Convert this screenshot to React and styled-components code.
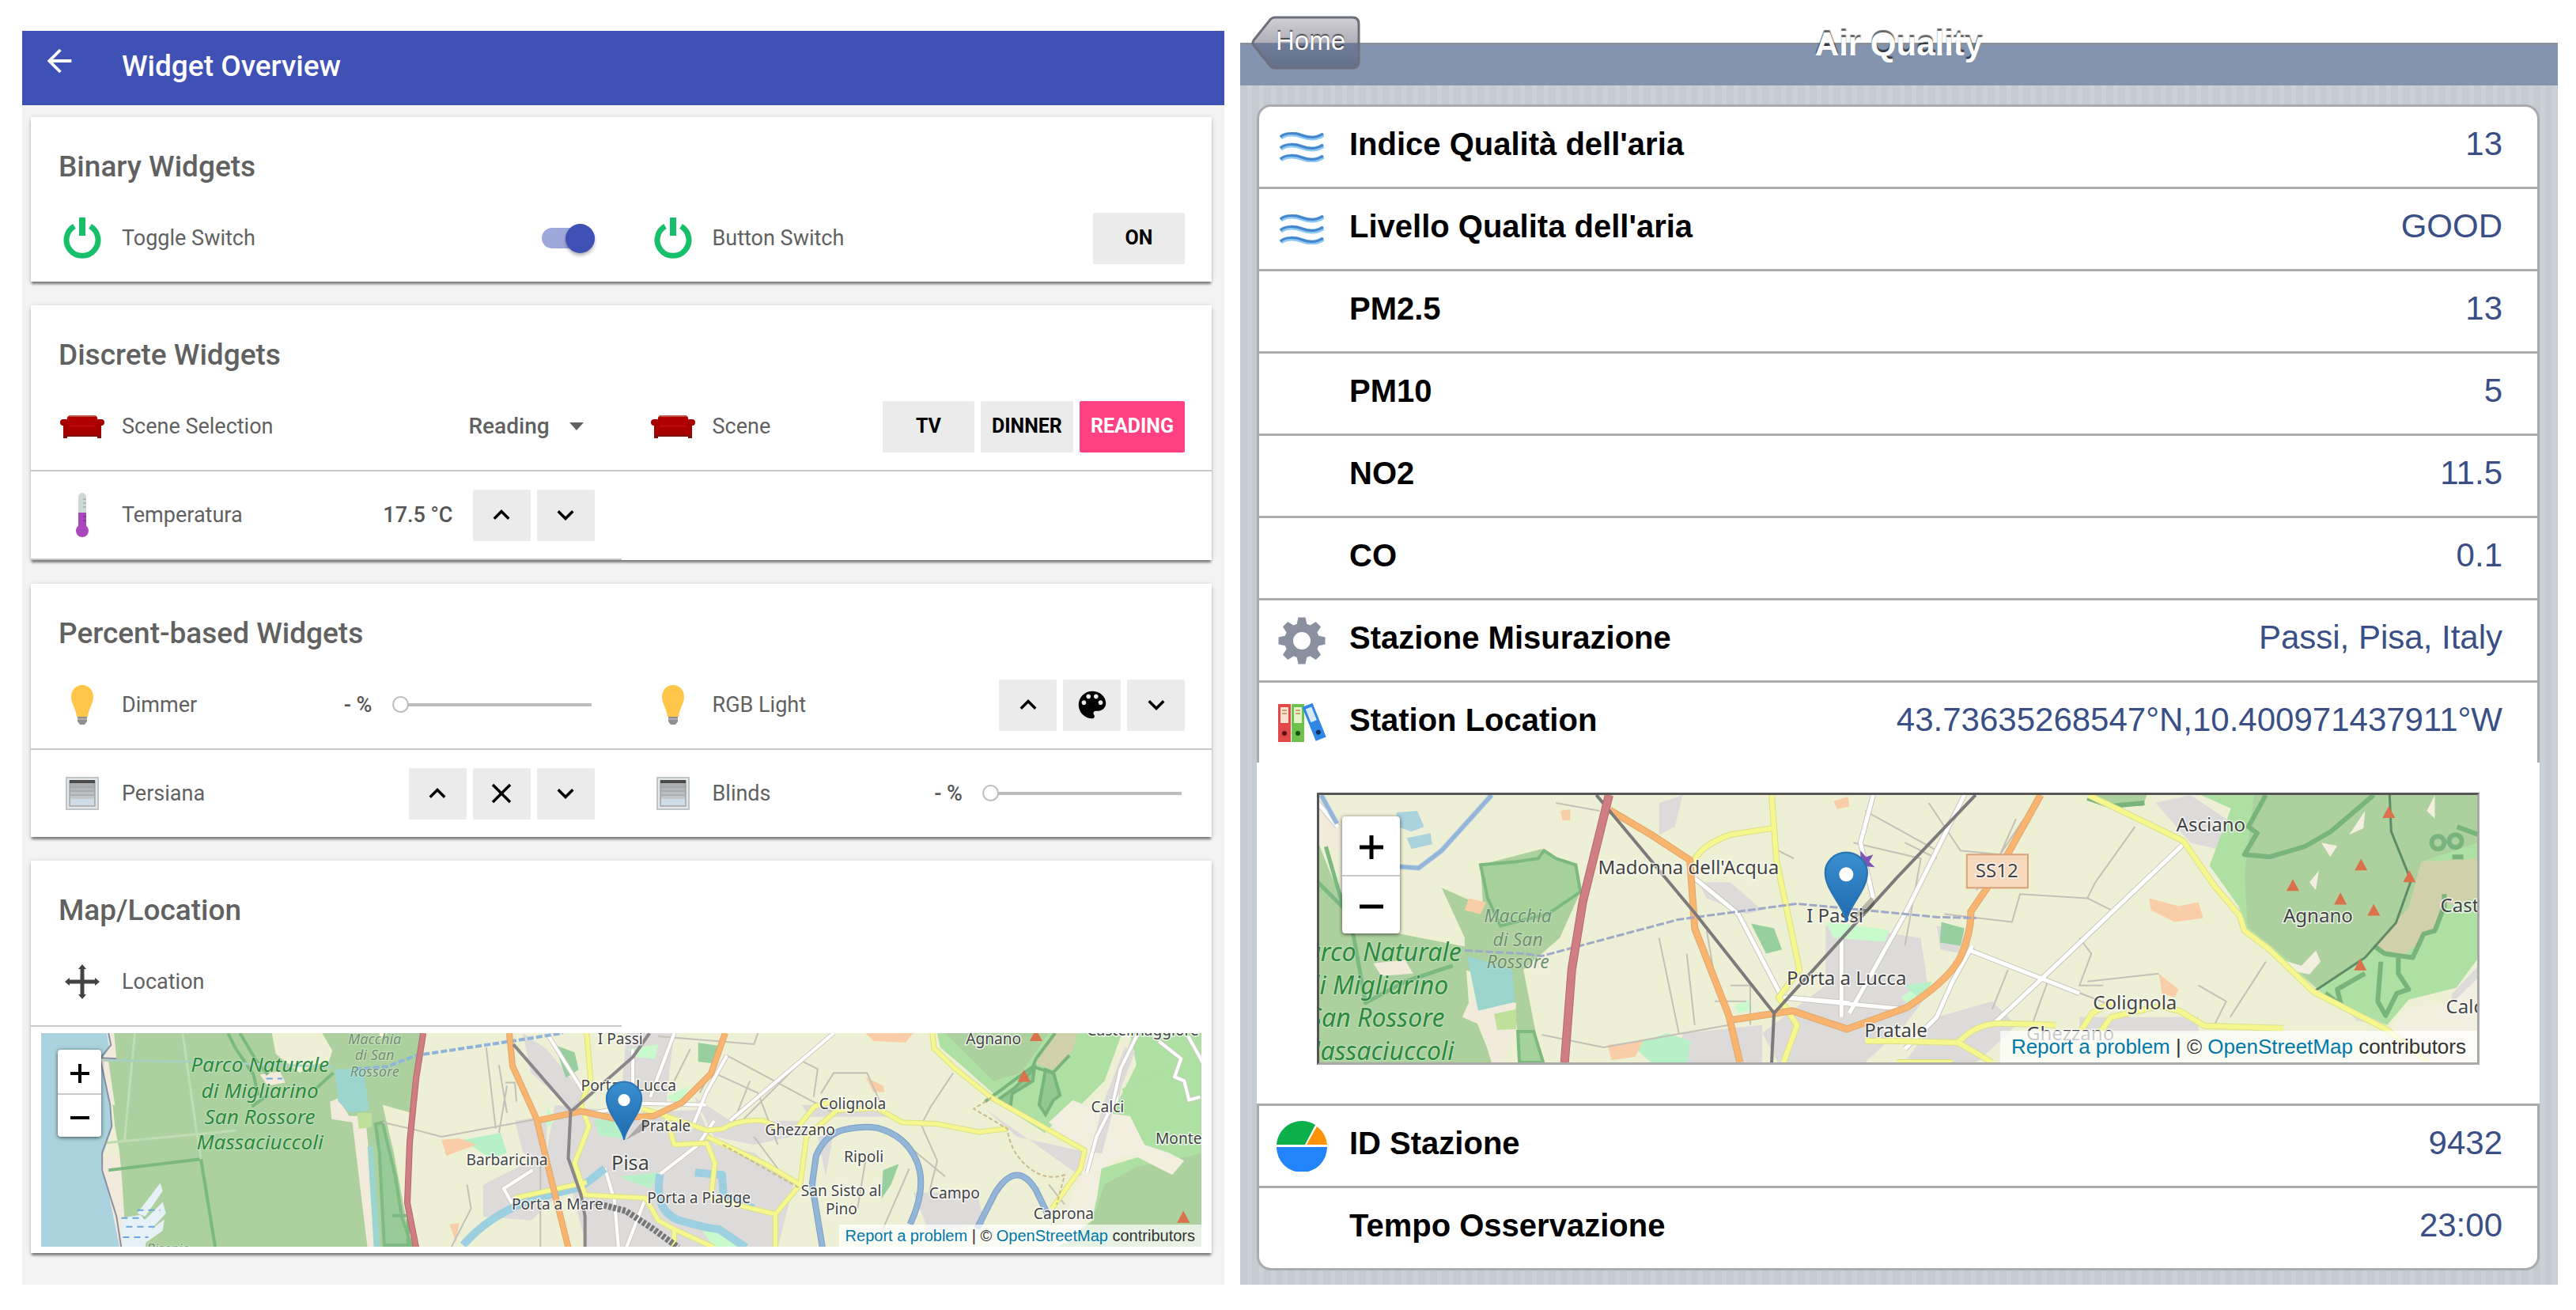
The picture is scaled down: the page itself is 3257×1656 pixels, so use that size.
import React from "react";
import styled, { createGlobalStyle, css } from "styled-components";

const sans = `"Liberation Sans", Arial, sans-serif`;
const roboto = `Roboto, "Liberation Sans", sans-serif`;

const GlobalStyle = createGlobalStyle`
  *, *::before, *::after { box-sizing: border-box; }
  body { margin: 0; background: #fff; font-family: ${roboto}; }
  h1, h2, ul, p { margin: 0; padding: 0; }
  button, select, input { font: inherit; margin: 0; }
`;

/* ---------- page ---------- */

const Page = styled.main`
  display: grid;
  grid-template-columns: 1520fr 1666fr;
  gap: 20px;
  min-height: 100vh;
  padding: 0 23px 32px 28px;
`;

/* ---------- widget overview panel ---------- */

const WidgetPanel = styled.section`
  margin-top: 39px;
  background: #f3f3f3;
`;

const AppBar = styled.header`
  display: flex;
  gap: 56px;
  height: 94px;
  padding: 15px 24px;
  background: #3f51b5;
  color: #fff;
`;

const BackButton = styled.button`
  display: flex;
  align-items: center;
  width: 46px;
  height: 46px;
  padding: 0;
  border: 0;
  background: none;
  color: inherit;
`;

const AppTitle = styled.h1`
  font: 500 37px/60px ${roboto};
`;

const Cards = styled.div`
  display: flex;
  flex-direction: column;
  gap: 30px;
  padding: 15px 16px 40px 11px;
`;

const Card = styled.section`
  background: #fff;
  box-shadow: 0 4px 3px -1px rgba(0, 0, 0, 0.45), 0 1px 6px rgba(0, 0, 0, 0.16);
`;

const CardTitle = styled.h2`
  padding: 36px 35px 8px;
  color: #616161;
  font: 500 37px/54px ${roboto};
`;

const Row = styled.div`
  display: grid;
  grid-template-columns: 1fr 1fr;
`;

const Cell = styled.div`
  display: flex;
  align-items: center;
  gap: 21px;
  height: ${(p) => (p.$line ? 112 : 110)}px;
  padding: 0 34px 0 36px;
  border-bottom: ${(p) => (p.$line ? "2px solid #c8c8c8" : "0")};
`;

const IconBox = styled.span`
  display: flex;
  justify-content: center;
  width: 58px;
`;

const Label = styled.label`
  flex: 1;
  color: #616161;
  font: 400 27px/36px ${roboto};
`;

const Reading = styled.output`
  padding-right: 4px;
  color: #555;
  font: 500 27px/36px ${roboto};
`;

const Buttons = styled.div`
  display: flex;
  gap: 8px;
`;

const flat = css`
  height: 65px;
  border: 0;
  border-radius: 2px;
  background: ${(p) => (p.$active ? "#ff4081" : "#ebebeb")};
  color: ${(p) => (p.$active ? "#fff" : "#000")};
`;

const TextButton = styled.button`
  ${flat}
  min-width: 116px;
  padding: 0 14px;
  font: 700 25px/36px ${roboto};
`;

const IconButton = styled.button`
  ${flat}
  display: flex;
  align-items: center;
  justify-content: center;
  width: 73px;
  padding: 0;
`;

const Toggle = styled.input`
  appearance: none;
  display: flex;
  align-items: center;
  justify-content: flex-end;
  width: 67px;
  height: 26px;
  border-radius: 13px;
  background: #9fa8da;

  &::before {
    content: "";
    width: 37px;
    height: 37px;
    border-radius: 50%;
    background: #3f51b5;
    box-shadow: 0 3px 4px rgba(0, 0, 0, 0.3);
  }
`;

const Slider = styled.input`
  appearance: none;
  width: 256px;
  height: 24px;
  padding-right: 4px;
  background: none;

  &::-webkit-slider-runnable-track {
    height: 4px;
    background: linear-gradient(90deg, transparent 20px, #bdbdbd 20px);
  }

  &::-webkit-slider-thumb {
    appearance: none;
    width: 21px;
    height: 21px;
    margin-top: -9px;
    border: 2px solid #bdbdbd;
    border-radius: 50%;
    background: #fff;
  }
`;

const SelectWrap = styled.span`
  display: flex;
  align-items: center;
  gap: 24px;
  padding-right: 14px;
`;

const Select = styled.select`
  appearance: none;
  padding: 0;
  border: 0;
  background: none;
  color: #616161;
  font: 500 28px/36px ${roboto};
`;

/* ---------- maps ---------- */

const MapInset = styled.div`
  padding: 8px 13px;
`;

const MapBox = styled.div`
  position: relative;
  height: ${(p) => p.$height}px;
  overflow: hidden;
  background: #eef0d5;
  ${(p) =>
    p.$framed &&
    css`
      border: 3px solid #a9a9a9;
      border-top-color: #555;
      border-left-color: #555;
    `}
`;

const MapSvg = styled.svg`
  display: block;
  width: 100%;
  height: 100%;
`;

const ZoomControl = styled.div`
  position: absolute;
  top: ${(p) => (p.$large ? 27 : 21)}px;
  left: ${(p) => (p.$large ? 29 : 21)}px;
  display: flex;
  flex-direction: column;
  width: ${(p) => (p.$large ? 73 : 55)}px;
  border-radius: 4px;
  background: #fff;
  box-shadow: 0 1px 5px rgba(0, 0, 0, 0.65);
`;

const ZoomButton = styled.button`
  display: flex;
  align-items: center;
  justify-content: center;
  height: ${(p) => (p.$large ? 74 : 55)}px;
  padding: 4px 0 0;
  border: 0;
  background: none;
  color: #000;

  & + & {
    border-top: 2px solid #c8c8c8;
  }
`;

const Attribution = styled.p`
  position: absolute;
  right: 0;
  bottom: 0;
  padding: ${(p) => (p.$large ? "0 14px" : "0 8px")};
  background: rgba(255, 255, 255, 0.72);
  color: #333;
  font: 400 ${(p) => (p.$large ? "26px/40px" : "20px/28px")} ${sans};
  white-space: nowrap;
`;

const MapLink = styled.a`
  color: #0078a8;
  text-decoration: none;
`;

const Place = styled.text`
  fill: #444;
  stroke: rgba(255, 255, 255, 0.75);
  stroke-width: 3px;
  paint-order: stroke;
  font: 400 ${(p) => p.$size || 20}px "Noto Sans", sans-serif;
`;

const Nature = styled.text`
  fill: ${(p) => (p.$muted ? "#6f9073" : "#2c8a3f")};
  stroke: rgba(255, 255, 255, 0.35);
  stroke-width: 2px;
  paint-order: stroke;
  text-anchor: middle;
  font: italic 400 ${(p) => p.$size}px "Noto Sans", sans-serif;
`;

/* ---------- air quality panel ---------- */

const AirPanel = styled.section`
  display: flex;
  flex-direction: column;
`;

const TitleBar = styled.header`
  display: grid;
  grid-template-columns: 1fr auto 1fr;
  align-items: center;
  height: 108px;
  padding: 0 14px;
  background: linear-gradient(#fff 54px, #8a8f9c 54px, #8a8f9c 57px, #8394af 57px);
`;

const HomeButton = styled.button`
  position: relative;
  justify-self: start;
  width: 138px;
  height: 68px;
  padding: 0 0 4px 12px;
  border: 0;
  background: none;
  color: #fff;
  font: 400 33px/60px ${sans};
  text-shadow: 0 -2px 1px rgba(0, 0, 0, 0.6);
`;

const HomeShape = styled.svg`
  position: absolute;
  inset: 0;
`;

const HomeText = styled.span`
  position: relative;
`;

const AirTitle = styled.h1`
  padding-top: 4px;
  color: #fff;
  font: 700 42px/60px ${sans};
  text-shadow: 0 -3px 1px rgba(0, 0, 0, 0.6);
`;

const Striped = styled.div`
  flex: 1;
  display: flex;
  padding: 24px 23px 18px 21px;
  background: repeating-linear-gradient(90deg, #c5cbd1 0 9px, #c9d2d9 9px 15px);
`;

const List = styled.ul`
  flex: 1;
  display: flex;
  flex-direction: column;
  border: 3px solid #a9abae;
  border-radius: 18px;
  background: #fff;
  list-style: none;
`;

const Item = styled.li`
  flex: 1;
  display: flex;
  align-items: center;
  gap: 28px;
  padding: 0 44px 0 22px;
  border-bottom: ${(p) => (p.$open ? "0" : "3px solid #a9abae")};
`;

const ItemIcon = styled.span`
  display: flex;
  justify-content: center;
  width: 64px;
`;

const ItemName = styled.span`
  flex: 1;
  padding-bottom: 8px;
  color: #000;
  font: 700 40px/48px ${sans};
`;

const ItemValue = styled.span`
  padding-bottom: 8px;
  color: #3a4f85;
  font: 400 42px/48px ${sans};
`;

const MapItem = styled.li`
  height: 434px;
  margin: 0 -3px;
  padding: 38px 76px 0;
  border-bottom: 3px solid #a9abae;
  background: #fff;
`;

/* ---------- icons ---------- */

const Glyph = ({ d, size = 42 }) => (
  <svg width={size} height={size} viewBox="0 0 24 24" fill="currentColor" aria-hidden="true">
    <path d={d} />
  </svg>
);

const BACK = "M20 11H7.83l5.59-5.59L12 4l-8 8 8 8 1.41-1.41L7.83 13H20v-2z";
const UP = "M7.41 15.41L12 10.83l4.59 4.58L18 14l-6-6-6 6z";
const DOWN = "M7.41 8.59L12 13.17l4.59-4.58L18 10l-6 6-6-6z";
const CLOSE =
  "M19 6.41L17.59 5 12 10.59 6.41 5 5 6.41 10.59 12 5 17.59 6.41 19 12 13.41 17.59 19 19 17.59 13.41 12z";
const PALETTE =
  "M12 3c-4.97 0-9 4.03-9 9s4.03 9 9 9c.83 0 1.5-.67 1.5-1.5 0-.39-.15-.74-.39-1.01-.23-.26-.38-.61-.38-.99 0-.83.67-1.5 1.5-1.5H16c2.76 0 5-2.24 5-5 0-4.42-4.03-8-9-8zm-5.5 9c-.83 0-1.5-.67-1.5-1.5S5.67 9 6.5 9 8 9.67 8 10.5 7.33 12 6.5 12zm3-4C8.67 8 8 7.33 8 6.5S8.67 5 9.5 5s1.5.67 1.5 1.5S10.33 8 9.5 8zm5 0c-.83 0-1.5-.67-1.5-1.5S13.67 5 14.5 5s1.5.67 1.5 1.5S15.33 8 14.5 8zm3 4c-.83 0-1.5-.67-1.5-1.5S16.67 9 17.5 9s1.5.67 1.5 1.5-.67 1.5-1.5 1.5z";

const PowerIcon = () => (
  <svg width="48" height="54" viewBox="0 0 48 54" fill="none" stroke="#17bf6b" strokeWidth="7">
    <path d="M14 12A20 20 0 1 0 34 12" />
    <path d="M24 1V24" strokeWidth="8" />
  </svg>
);

const SofaIcon = () => (
  <svg width="58" height="30" viewBox="0 0 58 30">
    <path d="M10 4Q11 1 14 1H44Q47 1 48 4L49 14H9Z" fill="#b00000" />
    <path d="M11 3Q12 1 14 1H44Q46 1 47 3Z" fill="#c0564a" />
    <path d="M1 10Q1 6 5 6H9Q11 6 12 9L13 13H45L46 9Q47 6 49 6H53Q57 6 57 10Q57 14 53 14V28H5V14Q1 14 1 10Z" fill="#a60000" />
    <path d="M12 13H46V16H12Z" fill="#b90808" />
    <path d="M5 26H53V30H48V28H10V30H5Z" fill="#7c1212" />
  </svg>
);

const ThermometerIcon = () => (
  <svg width="18" height="58" viewBox="0 0 18 58">
    <rect x="4" y="1" width="10" height="46" rx="5" fill="#cfd8d6" />
    <path d="M4 26H14V44H4Z" fill="#ab47bc" />
    <circle cx="9" cy="49" r="8" fill="#ab47bc" />
    <path d="M10 9h4M10 14h4M10 19h4" stroke="#9fb0ae" strokeWidth="1.5" />
    <path d="M10 31h4M10 36h4" stroke="#7c3a8a" strokeWidth="1.5" />
  </svg>
);

const BulbIcon = () => (
  <svg width="32" height="52" viewBox="0 0 32 52">
    <path d="M16 1C7 1 2 8 2 16C2 25 8 30 9 41H23C24 30 30 25 30 16C30 8 25 1 16 1Z" fill="#ffc64a" />
    <path d="M10 41H22V47L19 51H13L10 47Z" fill="#8f8f92" />
    <path d="M10 44H22" stroke="#b9b9bb" strokeWidth="1.5" />
  </svg>
);

const BlindsIcon = () => (
  <svg width="42" height="42" viewBox="0 0 42 42">
    <defs>
      <linearGradient id="slat" x2="0" y2="1">
        <stop offset="0" stopColor="#a8a8a8" />
        <stop offset="1" stopColor="#d2d6d8" />
      </linearGradient>
    </defs>
    <rect x="1" y="1" width="40" height="40" fill="#e3e7ea" stroke="#bfc4c7" strokeWidth="2" />
    <rect x="5" y="5" width="32" height="32" fill="url(#slat)" stroke="#8a8d90" />
    <rect x="5" y="4" width="32" height="4" fill="#4a4a4a" />
    <path d="M6 13H36M6 18H36M6 23H36" stroke="#9a9da0" />
    <rect x="6" y="28" width="30" height="8" fill="#cfdde8" />
  </svg>
);

const MoveIcon = () => (
  <svg width="44" height="44" viewBox="0 0 44 44" stroke="#424242" fill="#424242">
    <path d="M22 3V41M3 22H41" strokeWidth="5" />
    <path d="M22 0l5 6H17zM22 44l5-6H17zM0 22l6-5v10zM44 22l-6-5v10z" stroke="none" />
  </svg>
);

const WavesIcon = () => (
  <svg width="56" height="38" viewBox="0 0 56 38" fill="none">
    {[5, 19, 33].map((y) => (
      <React.Fragment key={y}>
        <path d={`M1 ${y + 2}C8 ${y - 4} 20 ${y - 3} 28 ${y}S46 ${y + 4} 55 ${y - 2}`} stroke="#8cc8f5" strokeWidth="6" />
        <path d={`M1 ${y + 1}C8 ${y - 5} 20 ${y - 4} 28 ${y - 1}S46 ${y + 3} 55 ${y - 3}`} stroke="#4585cc" strokeWidth="3" />
      </React.Fragment>
    ))}
  </svg>
);

const GearIcon = () => (
  <svg width="60" height="60" viewBox="-30 -30 60 60">
    {[0, 45, 90, 135, 180, 225, 270, 315].map((a) => (
      <path key={a} d="M-7 -18L-4.500 -29.500H4.500L7 -18Z" fill="#8a90a0" transform={`rotate(${a})`} />
    ))}
    <circle r="16.500" fill="none" stroke="#8a90a0" strokeWidth="11" />
  </svg>
);

const BindersIcon = () => (
  <svg width="62" height="50" viewBox="0 0 62 50">
    <rect x="1" y="1" width="16" height="48" fill="#e0484a" />
    <rect x="18" y="1" width="16" height="48" fill="#6cc24a" />
    <g transform="rotate(-22 46 25)">
      <rect x="40" y="1" width="14" height="46" fill="#2f86e6" />
      <rect x="43" y="5" width="8" height="18" fill="#d7e8f7" />
      <circle cx="47" cy="38" r="3" fill="#10305c" />
    </g>
    <rect x="4" y="5" width="10" height="20" fill="#fbe0d0" />
    <rect x="21" y="5" width="10" height="20" fill="#e4f3c9" />
    <path d="M6 9h6M6 13h6M23 9h6M23 13h6" stroke="#c08a4a" strokeWidth="1.500" />
    <circle cx="9" cy="38" r="3" fill="#5c0f0f" />
    <circle cx="26" cy="38" r="3" fill="#14501a" />
  </svg>
);

const PieIcon = () => (
  <svg width="64" height="64" viewBox="-32 -32 64 64">
    <path d="M-32 1A32 32 0 0 0 32 1Z" fill="#2184fb" />
    <path d="M-32 -2A32 32 0 0 1 17 -27L4 -2Z" fill="#0bb04b" />
    <path d="M19 -25A32 32 0 0 1 32 -2H6Z" fill="#ff9408" />
  </svg>
);

/* ---------- map drawing ---------- */

const Lines = ({ paths, color, width, casing, dash }) => (
  <g fill="none" strokeLinejoin="round" strokeLinecap="butt">
    {casing && paths.map((d) => <path key={"c" + d} d={d} stroke={casing} strokeWidth={width + 2} />)}
    {paths.map((d) => (
      <path key={d} d={d} stroke={color} strokeWidth={width} strokeDasharray={dash} />
    ))}
  </g>
);

const Areas = ({ paths, color, stroke }) => (
  <g fill={color} stroke={stroke || "none"} strokeWidth="4">
    {paths.map((d) => (
      <path key={d} d={d} />
    ))}
  </g>
);

const Peaks = ({ at }) => (
  <g fill="#d9724a">
    {at.map(([x, y]) => (
      <path key={x} d={`M${x} ${y - 8}l8 15h-16z`} />
    ))}
  </g>
);

const Marker = ({ x, y, scale }) => (
  <g transform={`translate(${x} ${y}) scale(${scale})`}>
    <defs>
      <linearGradient id={`pin${x}`} x2="0" y2="1">
        <stop offset="0" stopColor="#3a8fcf" />
        <stop offset="1" stopColor="#1f69b0" />
      </linearGradient>
    </defs>
    <path d="M2 0L26 -26Q34 -20 24 -12Z" fill="rgba(0,0,0,.22)" />
    <path
      d="M0 0C-2 -17 -22 -33 -22 -52A22 21 0 0 1 22 -52C22 -33 2 -17 0 0Z"
      fill={`url(#pin${x})`}
      stroke="#2a74b4"
      strokeWidth="2"
    />
    <circle cy="-50" r="7.500" fill="#fff" />
  </g>
);

const Labels = ({ items, size }) =>
  items.map(([x, y, text, own]) => (
    <Place key={text} x={x} y={y} $size={own || size}>
      {text}
    </Place>
  ));

const PisaMap = () => (
  <MapSvg viewBox="0 0 1467 268" preserveAspectRatio="xMidYMid slice" role="img" aria-label="Pisa">
    <rect width="1467" height="268" fill="#eef0d5" />
    <Areas color="#aad3df" paths={["M0 0H88L91 15L86 30L80 34L91 90L94 120L82 155L81 172L88 190L101 230L104 269H0Z"]} />
    <Areas color="#add19e" paths={["M96 0H485L476 57L468 137L465 213L476 269H110L96 190L104 150L98 117L92 60L88 34L98 30Z"]} />
    <Areas color="#f2ebdc" paths={["M88 0H97L100 32L80 34L91 20ZM80 36L90 36L98 90L92 90ZM84 155L104 152L106 172L108 200L112 269H104L88 190L81 168Z"]} />
    <Areas color="#eef0d5" paths={["M295 0H358L371 22L365 40L350 38L330 50L300 26Z", "M430 0L440 0L430 8Z", "M434 90L470 100L465 213L476 269H470L448 150Z"]} />
    <Areas color="#98cb95" stroke="#7fbb82" paths={["M425 114L434 112L450 180L458 230L470 266H436L430 150Z"]} />
    <Areas color="#f2ebdc" paths={["M368 86L378 82L392 104H412L430 269H415L396 112L370 108Z", "M280 52L305 48L312 62L290 66Z"]} />
    <Areas color="#9bd5cd" paths={["M374 45H410L417 97L392 100L378 85Z", "M415 142H422L431 269H423Z"]} />
    <Areas color="#bfe09b" paths={["M402 100H420V118L404 120Z"]} />
    <Lines
      color="#7cb981"
      width={4}
      paths={[
        "M90 172L206 158L224 269",
        "M240 0L250 20L272 52L278 78M270 92L290 78",
        "M255 0L275 34L290 52M350 70L372 50",
        "M446 229H466V269",
      ]}
    />
    <Lines color="#bfdcb4" width={3} paths={["M123 0L110 135M84 138L250 122", "M183 0L200 120L206 158"]} />
    <Lines color="#a9cfc0" width={3} paths={["M84 34L200 36L300 40L372 42"]} />
    <Areas color="#e6f1f7" paths={["M155 188L158 198L136 230L126 226ZM158 212L162 226L140 250L126 244ZM160 234L158 248L138 262L130 256ZM106 232L130 228L142 240L136 268H108Z"]} />
    <Lines color="#6aa7e0" width={2} dash="8 6" paths={["M106 232H135M112 243H150M108 256H140M126 222H155M288 57H308"]} />
    <g fill="#dddbd9">
      <path d="M650 90L700 95L760 100L830 96L850 140L900 150L950 190L930 269H690L672 200L640 150Z" />
      <path d="M740 0H800L795 40L790 90L750 90L735 60ZM610 0L640 20L690 80L672 96L620 50Z" />
      <path d="M560 190L620 160L660 150L670 190L620 235L560 230ZM600 110L640 104L640 170L610 150Z" />
      <path d="M825 80L870 110L960 110L970 125L900 140L850 130ZM1100 200H1180L1190 240L1120 250Z" />
      <path d="M1190 95L1230 130L1320 150L1340 170L1310 180L1240 130ZM960 90H1060L1070 105H970ZM980 130L1000 125L990 180Z" />
    </g>
    <Areas color="#b7f0c6" paths={["M535 134L582 125L590 150L570 158Z", "M700 108L740 112L735 132L705 128Z", "M730 180L780 175L770 195Z"]} />
    <Areas color="#f9cda8" paths={["M508 134L530 132L552 140L530 148L514 154ZM1040 0L1100 0L1090 12L1050 10ZM1040 55L1062 66L1064 74L1050 74ZM518 240L530 238L526 262Z"]} />
    <Areas color="#c8facc" paths={["M640 90L650 110L640 120ZM742 20L780 14L776 32L750 30ZM790 80L820 66L806 90ZM830 240L870 256L890 269H850Z"]} />
    <Areas color="#98cfa0" paths={["M650 15L675 24L680 46L664 56ZM830 12L855 16L850 38L830 36ZM1062 172L1082 164L1072 190L1060 208Z"]} />
    <Lines
      color="#c4c0b8"
      width={2}
      paths={[
        "M564 18L576 120M580 40L590 100M588 62H600L602 86M590 66L580 125M434 112L470 120L508 130L627 108",
        "M866 28L1000 100M1000 0L960 35L880 115M960 35L980 45L975 80M984 76L1000 50H1042L1060 90M1150 50L1122 92L1110 115",
        "M850 50L905 75L930 140M895 60L875 110M900 130L930 170M1110 115L1130 160L1120 200M1080 130L1140 180M1040 160L1030 220M1095 170L1060 250",
        "M1270 190L1290 215M1250 90L1310 120L1320 170M1330 100L1390 130M520 269L545 220L540 190",
        "M905 0L900 14L780 4M820 20L800 60M840 60L832 75M632 160V269",
      ]}
    />
    <Lines
      color="#ffffff"
      width={4}
      casing="#cfcac2"
      paths={[
        "M640 0L690 80L675 94M748 20V110M800 0L770 80M1000 0L870 110",
        "M600 220L586 195L622 172M713 170L725 210L730 269M764 207L740 269M782 177L830 140L850 110",
        "M866 28L840 75L822 120M700 100L760 88L840 90",
        "M1380 0L1360 50L1355 85L1330 120L1320 180",
      ]}
    />
    <Lines color="#8fb4dc" width={4} paths={["M400 45L440 42L476 28L596 10L660 0"]} dash="8 3" />
    <Areas color="#aedfa3" paths={["M1130 0L1134 18L1160 40L1205 80L1225 100L1265 125L1290 100L1310 90L1340 60L1362 0H1467V269H1345L1325 235L1336 170L1400 150L1370 120L1350 100L1380 40L1372 0Z"]} />
    <Areas color="#aedfa3" paths={["M1362 70L1467 20V150L1400 130L1375 105Z"]} />
    <Areas color="#add19e" paths={["M1340 190L1380 168L1467 150V269H1280L1325 235ZM1140 0H1270L1235 50L1200 60Z"]} />
    <Areas color="#f2efe0" paths={["M1270 112L1300 84L1340 100L1372 104L1390 140L1420 150L1440 160L1425 178L1370 150L1336 170L1330 210L1300 260L1275 269L1310 180L1318 150Z"]} />
    <Areas color="#d0d0ab" paths={["M1278 0H1306L1300 22L1280 48L1254 38Z"]} />
    <Areas color="#93c991" stroke="#79b47d" paths={["M1252 44L1228 68L1206 84L1222 92L1224 76L1250 60ZM1266 46L1258 90L1266 102L1276 84L1284 78L1276 50Z"]} />
    <Lines color="#79b47d" width={4} paths={["M1278 0L1254 32L1250 42L1275 50L1296 28M1250 42L1190 86"]} />
    <Lines color="#dddbd9" width={14} paths={["M1372 20L1345 90L1330 150"]} />
    <Lines color="#fff" width={4} casing="#cfcac2" paths={["M1382 0L1360 45L1350 90L1330 130L1318 175", "M1408 10L1436 32L1428 55L1440 60L1446 84L1460 80M1445 4L1465 40"]} />
    <Lines color="#92b5d8" width={6} casing="#7aa1c9" paths={["M986 269L973 190L978 154Q990 126 1014 121T1055 119Q1090 128 1104 160T1096 240", "M1180 245L1203 200Q1230 158 1254 197L1270 230"]} />
    <Lines color="#9ccfe0" width={10} paths={["M535 266Q570 226 627 207L683 193L713 170", "M782 177Q774 226 810 236T856 246L890 269", "M826 175L860 178L862 205L900 220"]} />
    <Lines
      color="#f6f78f"
      width={5}
      casing="#dcdf88"
      paths={[
        "M690 0L695 57L683 90L693 117L675 163L688 203L764 207L780 235L800 246V269",
        "M760 95L790 104L841 122L861 120Q880 108 912 110L930 118",
        "M790 104L800 140L841 138L851 163L846 207",
        "M841 130L912 163L958 190L927 227V269",
        "M846 207L897 220L927 227",
        "M958 190L966 130L1004 97L1055 94L1086 112L1131 114L1182 124L1218 120",
        "M955 118L976 92L1000 86",
        "M1124 0L1126 19L1152 44L1198 81L1244 107L1315 147L1310 170L1274 220",
        "M600 207L690 187M800 246L850 269",
      ]}
    />
    <Lines color="#c9b98c" width={2} dash="5 3" paths={["M1198 81L1176 95L1218 120Q1222 150 1244 168T1290 178L1280 215M861 140L958 195"]} />
    <Lines color="#f9b46f" width={6} casing="#dfa76c" paths={["M593 0L597 41L627 107L644 177L667 269", "M627 110L683 98L724 107L774 104L810 87L846 51L864 0"]} />
    <Lines color="#8a8689" width={4} paths={["M598 14L670 97L667 157L683 203L688 230V269", "M769 0L748 30L672 97"]} />
    <Lines color="#77777a" width={8} dash="4 2" paths={["M700 213L739 223L774 246L805 269"]} />
    <Lines color="#cf7f82" width={6} casing="#b5686d" paths={["M485 0L476 57L468 137L465 213L476 269"]} />
    <Lines color="#8a8fa5" width={2} paths={["M90 0L93 15L80 31L100 32M80 34L92 90L94 117L82 150L82 172L100 230L106 269"]} />
    <Peaks at={[[1254, 3], [1239, 54], [1439, 231]]} />
    <Nature x="280" y="49" $size={26}>Parco Naturale</Nature>
    <Nature x="280" y="81" $size={26}>di Migliarino</Nature>
    <Nature x="280" y="114" $size={26}>San Rossore</Nature>
    <Nature x="280" y="146" $size={26}>Massaciuccoli</Nature>
    <Nature x="424" y="14" $size={18} $muted>Macchia</Nature>
    <Nature x="424" y="34" $size={18} $muted>di San</Nature>
    <Nature x="424" y="55" $size={18} $muted>Rossore</Nature>
    <Nature x="165" y="276" $size={17} $muted>Bisenio</Nature>
    <Labels
      size={19}
      items={[
        [704, 14, "I Passi"],
        [683, 72, "Porta a Lucca"],
        [758, 123, "Pratale"],
        [721, 172, "Pisa", 25],
        [539, 166, "Barbaricina"],
        [596, 221, "Porta a Mare"],
        [766, 213, "Porta a Piagge"],
        [914, 128, "Ghezzano"],
        [982, 95, "Colignola"],
        [1013, 162, "Ripoli"],
        [959, 204, "San Sisto al"],
        [990, 227, "Pino"],
        [1120, 207, "Campo"],
        [1251, 233, "Caprona"],
        [1323, 99, "Calci"],
        [1404, 139, "Monter"],
        [1166, 14, "Agnano"],
        [1318, 3, "Castelmaggiore"],
      ]}
    />
    <Marker x={737} y={134} scale={1} />
  </MapSvg>
);

const StationMap = () => (
  <MapSvg viewBox="0 0 1463 337" preserveAspectRatio="xMidYMid slice" role="img" aria-label="Passi, Pisa">
    <rect width="1463" height="337" fill="#eef0d5" />
    <Areas color="#add19e" paths={["M0 59L30 134L99 174L185 191L190 261L213 318L219 337H0Z", "M156 117L208 140L205 88L282 68L325 99L331 122L305 180L259 220L282 337H254L251 295L245 240L185 220L185 180Z"]} />
    <Areas color="#a5d19b" stroke="#7cb981" paths={["M205 88L250 84L278 80L285 70L300 80L325 88L331 122L290 150L230 165L214 130Z", "M252 298L272 298L284 337H254Z"]} />
    <Areas color="#aad3df" paths={["M99 22L125 20L134 40L118 46L100 40ZM112 54L142 48L144 62L118 68Z"]} />
    <Areas color="#f2ebdc" paths={["M190 262L250 262L248 290L232 337H219L205 290L182 280ZM70 212L110 208L120 225L80 228ZM0 20L30 40V70L0 60Z"]} />
    <Areas color="#f9cda8" paths={["M190 130L212 135L205 150L185 145Z"]} />
    <Areas color="#9bd5cd" paths={["M188 203L245 220L248 261L202 272Z"]} />
    <Areas color="#bfe09b" paths={["M222 276L250 270V295L226 296Z"]} />
    <Lines color="#7cb981" width={5} paths={["M0 110L40 150L60 262L110 235L170 215M10 65L30 134L50 160"]} />
    <g fill="#dddbd9">
      <path d="M430 10L460 0L450 40L430 50ZM480 110L520 110L560 145L540 150L490 130ZM640 165L690 170L760 180L770 250L740 290L690 337H580L560 300L600 270L640 240Z" />
      <path d="M780 280L850 260L880 290L860 310L830 337H740ZM1056 10L1100 0L1160 40L1140 70L1100 60ZM1160 140H1180V165H1165ZM780 165L815 170L812 200L785 195Z" />
      <path d="M1290 262L1330 255L1350 290L1310 285ZM1430 250L1463 215V300L1420 300ZM460 300L560 290V337H450ZM960 280H1110V300H960Z" />
    </g>
    <Areas color="#c8facc" paths={["M525 265L545 258L548 270L530 275ZM640 160L720 170L715 185L650 180ZM735 255L765 235L750 270Z"]} />
    <Areas color="#b7f0c6" paths={["M395 315L440 300L470 310L466 337H420ZM740 240L775 235L760 258Z"]} />
    <Areas color="#98cfa0" paths={["M546 162L575 168L585 195L565 200ZM786 160L815 168L810 190L784 186Z"]} />
    <Areas color="#f9cda8" paths={["M365 315L410 310L400 330L370 334ZM1048 130L1085 140L1110 135L1116 155L1080 160L1050 145ZM306 20L318 18V32L308 32ZM1060 225L1085 245L1080 255L1064 250ZM650 8L668 2L670 14L655 18Z"]} />
    <Lines
      color="#c4c0b8"
      width={2}
      paths={[
        "M430 180L455 300M465 200L475 290M490 170L500 230M282 302L360 318L518 290M500 260H540M300 10L355 20",
        "M1030 40L980 110L970 130L1000 145M970 130L885 125L875 160L790 150M770 10L810 70L860 75L880 30M830 120L890 30",
        "M1195 210L1150 280M970 235L1060 225M960 180L975 200L960 240L990 240M820 195L1000 265M870 220L850 270M920 235L900 290M1110 240L1145 260L1130 290",
        "M740 60L780 80M520 240H545V290M600 80L580 70M675 60L760 80L740 190M690 20L780 70",
      ]}
    />
    <Lines
      color="#ffffff"
      width={5}
      casing="#c8c4bd"
      paths={[
        "M700 0L684 60L700 130M1091 62L930 215L850 290M820 195L960 250M475 105L530 150L585 255L740 270",
        "M815 0L740 150L670 275M825 190L800 235L780 280L740 320M660 180V280M590 255L670 262M0 10L25 40",
      ]}
    />
    <Lines color="#92b5d8" width={5} casing="#c5d5e5" paths={["M4 0L24 36M219 0L156 70L127 92L99 90"]} />
    <Areas color="#aedfa3" paths={["M1113 0L1151 17L1124 89L1162 142L1168 166L1211 205L1277 258L1348 290L1375 258L1435 243L1463 205V0Z"]} />
    <Areas color="#add19e" paths={["M970 0H1045L1040 14L1000 12ZM1180 0H1463V60L1391 84L1375 142L1320 205L1260 245L1220 205L1172 166L1168 100Z"]} />
    <Areas color="#d0d0ab" paths={["M1391 84L1463 80V130L1420 140L1408 171L1364 205L1331 190L1375 142Z"]} />
    <Areas color="#f2efe0" paths={["M1205 205L1240 215L1258 196L1264 210L1250 226L1230 222ZM1265 60L1285 64L1276 78ZM1250 110L1262 95L1258 120ZM1300 50L1320 20L1318 42ZM1350 296L1380 268L1430 262L1463 230V337H1350ZM1398 20L1408 0V30Z"]} />
    <Lines
      color="#79b47d"
      width={6}
      paths={[
        "M970 4L1000 14L1042 10",
        "M1195 0L1173 40L1184 48L1168 75L1200 78L1244 65L1277 46L1331 0",
        "M1404 60a8 8 0 1 0 16 0a8 8 0 1 0 -16 0M1426 58a8 8 0 1 0 16 0a8 8 0 1 0 -16 0M1436 40L1463 50M1430 78H1444",
        "M1420 125L1420 140L1408 171L1394 175L1380 205L1345 200L1331 190",
        "M1270 250L1290 265L1285 245L1320 225",
        "M1340 210L1336 260L1346 278L1360 250L1375 245L1362 225V205",
      ]}
    />
    <Lines color="#5e8c68" width={3} paths={["M1351 0L1353 46L1378 108L1359 161L1320 205L1255 248"]} />
    <Lines
      color="#f6f78f"
      width={6}
      casing="#dcdf88"
      paths={[
        "M572 0L578 82L607 220L581 255L604 290L587 337M572 42L520 50Q480 64 472 88",
        "M971 0L1036 31L1091 58L1129 113L1162 152L1168 171L1200 195L1255 248L1348 296L1400 337",
        "M690 310H730L807 312Q830 288 860 288T930 290M807 312L850 337M730 337H800",
        "M960 300L976 275L1000 262M985 300L1000 280L1060 266L1086 272L1118 291L1217 294",
      ]}
    />
    <Lines color="#f9b46f" width={7} casing="#dfa76c" paths={["M368 19L420 50L469 82L475 168L518 278L532 337", "M518 284L598 272L667 295L742 268Q800 230 812 200T823 147L856 99L911 0"]} />
    <Lines color="#9da9c6" width={3} dash="10 3" paths={["M185 196L260 200L282 203L454 157L604 137L781 154L830 155"]} />
    <Lines color="#7d7a7c" width={4} paths={["M351 0L477 151L575 275L572 337", "M829 0L730 104L575 275"]} />
    <Lines color="#cf7f82" width={9} casing="#b5686d" paths={["M367 0L334 134L320 220L311 337"]} />
    <Peaks at={[[1350, 22], [1315, 88], [1376, 103], [1229, 114], [1289, 131], [1331, 145], [1314, 214]]} />
    <rect x="818" y="75" width="77" height="42" fill="#f6d9bd" stroke="#d9a377" strokeWidth="2" />
    <Nature x="74" y="209" $size={32}>Parco Naturale</Nature>
    <Nature x="74" y="251" $size={32}>di Migliarino</Nature>
    <Nature x="74" y="292" $size={32}>San Rossore</Nature>
    <Nature x="74" y="334" $size={32}>Massaciuccoli</Nature>
    <Nature x="252" y="161" $size={23} $muted>Macchia</Nature>
    <Nature x="252" y="190" $size={23} $muted>di San</Nature>
    <Nature x="252" y="218" $size={23} $muted>Rossore</Nature>
    <Labels
      size={24}
      items={[
        [353, 100, "Madonna dell'Acqua"],
        [616, 161, "I Passi"],
        [591, 239, "Porta a Lucca"],
        [689, 305, "Pratale"],
        [829, 104, "SS12"],
        [1082, 46, "Asciano"],
        [1217, 161, "Agnano"],
        [1415, 148, "Cast"],
        [1422, 275, "Calci"],
        [977, 270, "Colignola"],
        [893, 309, "Ghezzano"],
      ]}
    />
    <path d="M684 70l7 8 9-3-5 9 7 7-10-1-4 9-3-10-9-2 8-5z" fill="#7d55b5" />
    <Marker x={666} y={160} scale={1.2} />
  </MapSvg>
);

const Map = ({ large, height, framed, children }) => (
  <MapBox $height={height} $framed={framed}>
    {children}
    <ZoomControl $large={large}>
      <ZoomButton $large={large} aria-label="Zoom in">
        <Glyph size={large ? 40 : 32} d="M3 10.500h7.500V3h3v7.500H21v3h-7.500V21h-3v-7.500H3z" />
      </ZoomButton>
      <ZoomButton $large={large} aria-label="Zoom out">
        <Glyph size={large ? 40 : 32} d="M3 10.500h18v3H3z" />
      </ZoomButton>
    </ZoomControl>
    <Attribution $large={large}>
      <MapLink href="#report">Report a problem</MapLink> | © <MapLink href="#osm">OpenStreetMap</MapLink> contributors
    </Attribution>
  </MapBox>
);

/* ---------- composition ---------- */

const Widget = ({ id, icon, label, line, children }) => (
  <Cell $line={line}>
    <IconBox>{icon}</IconBox>
    <Label htmlFor={id}>{label}</Label>
    {children}
  </Cell>
);

const StepButton = ({ name, d, size, id }) => (
  <IconButton id={id} aria-label={name}>
    <Glyph d={d} size={size} />
  </IconButton>
);

const MEASURES = [
  { name: "Indice Qualità dell'aria", value: "13", icon: <WavesIcon /> },
  { name: "Livello Qualita dell'aria", value: "GOOD", icon: <WavesIcon /> },
  { name: "PM2.5", value: "13" },
  { name: "PM10", value: "5" },
  { name: "NO2", value: "11.5" },
  { name: "CO", value: "0.1" },
  { name: "Stazione Misurazione", value: "Passi, Pisa, Italy", icon: <GearIcon /> },
  { name: "Station Location", value: "43.73635268547°N,10.400971437911°W", icon: <BindersIcon />, open: true },
];

const STATION = [
  { name: "ID Stazione", value: "9432", icon: <PieIcon /> },
  { name: "Tempo Osservazione", value: "23:00", open: true },
];

const Entry = ({ name, value, icon, open }) => (
  <Item $open={open}>
    <ItemIcon>{icon}</ItemIcon>
    <ItemName>{name}</ItemName>
    <ItemValue>{value}</ItemValue>
  </Item>
);

export default function App() {
  return (
    <>
      <GlobalStyle />
      <Page>
        <WidgetPanel>
          <AppBar>
            <BackButton aria-label="Back">
              <Glyph d={BACK} size={46} />
            </BackButton>
            <AppTitle>Widget Overview</AppTitle>
          </AppBar>
          <Cards>
            <Card>
              <CardTitle>Binary Widgets</CardTitle>
              <Row>
                <Widget id="toggle" icon={<PowerIcon />} label="Toggle Switch">
                  <Toggle id="toggle" type="checkbox" role="switch" defaultChecked />
                </Widget>
                <Widget id="button-switch" icon={<PowerIcon />} label="Button Switch">
                  <TextButton id="button-switch">ON</TextButton>
                </Widget>
              </Row>
            </Card>

            <Card>
              <CardTitle>Discrete Widgets</CardTitle>
              <Row>
                <Widget id="scene-select" icon={<SofaIcon />} label="Scene Selection" line>
                  <SelectWrap>
                    <Select id="scene-select" defaultValue="Reading">
                      <option>TV</option>
                      <option>Dinner</option>
                      <option>Reading</option>
                    </Select>
                    <svg width="18" height="11" viewBox="0 0 18 11" fill="#616161">
                      <path d="M0 0H18L9 10Z" />
                    </svg>
                  </SelectWrap>
                </Widget>
                <Widget id="scene-tv" icon={<SofaIcon />} label="Scene" line>
                  <Buttons>
                    <TextButton id="scene-tv">TV</TextButton>
                    <TextButton>DINNER</TextButton>
                    <TextButton $active>READING</TextButton>
                  </Buttons>
                </Widget>
              </Row>
              <Row>
                <Widget id="temp-up" icon={<ThermometerIcon />} label="Temperatura" line>
                  <Reading>17.5 °C</Reading>
                  <Buttons>
                    <StepButton id="temp-up" name="Warmer" d={UP} />
                    <StepButton name="Cooler" d={DOWN} />
                  </Buttons>
                </Widget>
              </Row>
            </Card>

            <Card>
              <CardTitle>Percent-based Widgets</CardTitle>
              <Row>
                <Widget id="dimmer" icon={<BulbIcon />} label="Dimmer" line>
                  <Reading>- %</Reading>
                  <Slider id="dimmer" type="range" defaultValue="0" />
                </Widget>
                <Widget id="rgb-up" icon={<BulbIcon />} label="RGB Light" line>
                  <Buttons>
                    <StepButton id="rgb-up" name="Brighter" d={UP} />
                    <StepButton name="Pick colour" d={PALETTE} size={46} />
                    <StepButton name="Darker" d={DOWN} />
                  </Buttons>
                </Widget>
              </Row>
              <Row>
                <Widget id="shutter-up" icon={<BlindsIcon />} label="Persiana">
                  <Buttons>
                    <StepButton id="shutter-up" name="Raise" d={UP} />
                    <StepButton name="Stop" d={CLOSE} />
                    <StepButton name="Lower" d={DOWN} />
                  </Buttons>
                </Widget>
                <Widget id="blinds" icon={<BlindsIcon />} label="Blinds">
                  <Reading>- %</Reading>
                  <Slider id="blinds" type="range" defaultValue="0" />
                </Widget>
              </Row>
            </Card>

            <Card>
              <CardTitle>Map/Location</CardTitle>
              <Row>
                <Widget icon={<MoveIcon />} label="Location" line />
              </Row>
              <MapInset>
                <Map height={270}>
                  <PisaMap />
                </Map>
              </MapInset>
            </Card>
          </Cards>
        </WidgetPanel>

        <AirPanel>
          <TitleBar>
            <HomeButton>
              <HomeShape width="138" height="68" viewBox="0 0 138 68" aria-hidden="true">
                <defs>
                  <linearGradient id="home" x2="0" y2="1">
                    <stop offset="0" stopColor="#d2cfd6" />
                    <stop offset="0.500" stopColor="#b0afb9" />
                    <stop offset="0.510" stopColor="#6f7c98" />
                    <stop offset="1" stopColor="#64718b" />
                  </linearGradient>
                </defs>
                <path
                  d="M30 2H128Q136 2 136 10V58Q136 66 128 66H30Q26 66 23 62L3 37Q1 34 3 31L23 6Q26 2 30 2Z"
                  fill="url(#home)"
                  stroke="#6c6f7c"
                  strokeWidth="3"
                />
              </HomeShape>
              <HomeText>Home</HomeText>
            </HomeButton>
            <AirTitle>Air Quality</AirTitle>
          </TitleBar>
          <Striped>
            <List>
              {MEASURES.map((m) => (
                <Entry key={m.name} {...m} />
              ))}
              <MapItem>
                <Map height={344} framed large>
                  <StationMap />
                </Map>
              </MapItem>
              {STATION.map((m) => (
                <Entry key={m.name} {...m} />
              ))}
            </List>
          </Striped>
        </AirPanel>
      </Page>
    </>
  );
}
